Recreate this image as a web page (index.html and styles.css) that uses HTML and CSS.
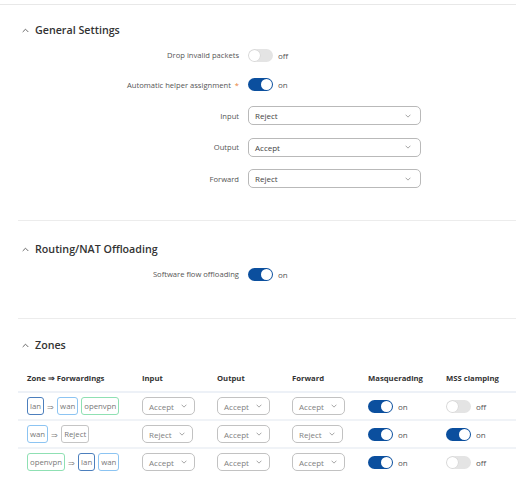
FILE: index.html
```html
<!DOCTYPE html>
<html>
<head>
<meta charset="utf-8">
<link rel="stylesheet" href="styles.css">
</head>
<body>
<div class="topbar"></div>

<section class="sec sec-general">
  <h2 class="sec-head"><svg class="caret" viewBox="0 0 8 5"><polyline points="0.8,4.2 4,1 7.2,4.2"/></svg>General Settings</h2>
  <div class="form">
    <div class="row r1"><label class="lbl">Drop invalid packets</label><div class="ctl"><span class="tog"></span><span class="st">off</span></div></div>
    <div class="row r2"><label class="lbl">Automatic helper assignment <span class="req">*</span></label><div class="ctl"><span class="tog on"></span><span class="st">on</span></div></div>
    <div class="row r3"><label class="lbl">Input</label><div class="ctl"><div class="sel"><span>Reject</span><svg class="chev" viewBox="0 0 8 5"><polyline points="0.8,0.8 4,4 7.2,0.8"/></svg></div></div></div>
    <div class="row r3"><label class="lbl">Output</label><div class="ctl"><div class="sel"><span>Accept</span><svg class="chev" viewBox="0 0 8 5"><polyline points="0.8,0.8 4,4 7.2,0.8"/></svg></div></div></div>
    <div class="row r3"><label class="lbl">Forward</label><div class="ctl"><div class="sel"><span>Reject</span><svg class="chev" viewBox="0 0 8 5"><polyline points="0.8,0.8 4,4 7.2,0.8"/></svg></div></div></div>
  </div>
</section>

<section class="sec sec-routing">
  <h2 class="sec-head"><svg class="caret" viewBox="0 0 8 5"><polyline points="0.8,4.2 4,1 7.2,4.2"/></svg>Routing/NAT Offloading</h2>
  <div class="form">
    <div class="row r1"><label class="lbl">Software flow offloading</label><div class="ctl"><span class="tog on"></span><span class="st">on</span></div></div>
  </div>
</section>

<section class="sec sec-zones">
  <h2 class="sec-head"><svg class="caret" viewBox="0 0 8 5"><polyline points="0.8,4.2 4,1 7.2,4.2"/></svg>Zones</h2>
  <div class="ztable">
    <div class="zrow zhead">
      <div class="c">Zone ⇒ Forwardings</div><div class="c">Input</div><div class="c">Output</div><div class="c">Forward</div><div class="c">Masquerading</div><div class="c">MSS clamping</div>
    </div>
    <div class="zrow">
      <div class="c"><span class="bd lan">lan</span><span class="arr">⇒</span><span class="bd wan">wan</span><span class="bd vpn">openvpn</span></div>
      <div class="c"><div class="ssel"><span>Accept</span><svg class="chev" viewBox="0 0 8 5"><polyline points="0.8,0.8 4,4 7.2,0.8"/></svg></div></div>
      <div class="c"><div class="ssel"><span>Accept</span><svg class="chev" viewBox="0 0 8 5"><polyline points="0.8,0.8 4,4 7.2,0.8"/></svg></div></div>
      <div class="c"><div class="ssel"><span>Accept</span><svg class="chev" viewBox="0 0 8 5"><polyline points="0.8,0.8 4,4 7.2,0.8"/></svg></div></div>
      <div class="c"><span class="tog on"></span><span class="st">on</span></div>
      <div class="c"><span class="tog"></span><span class="st">off</span></div>
    </div>
    <div class="zrow">
      <div class="c"><span class="bd wan">wan</span><span class="arr">⇒</span><span class="bd rej">Reject</span></div>
      <div class="c"><div class="ssel"><span>Reject</span><svg class="chev" viewBox="0 0 8 5"><polyline points="0.8,0.8 4,4 7.2,0.8"/></svg></div></div>
      <div class="c"><div class="ssel"><span>Accept</span><svg class="chev" viewBox="0 0 8 5"><polyline points="0.8,0.8 4,4 7.2,0.8"/></svg></div></div>
      <div class="c"><div class="ssel"><span>Reject</span><svg class="chev" viewBox="0 0 8 5"><polyline points="0.8,0.8 4,4 7.2,0.8"/></svg></div></div>
      <div class="c"><span class="tog on"></span><span class="st">on</span></div>
      <div class="c"><span class="tog on"></span><span class="st">on</span></div>
    </div>
    <div class="zrow last">
      <div class="c"><span class="bd vpn">openvpn</span><span class="arr">⇒</span><span class="bd lan">lan</span><span class="bd wan">wan</span></div>
      <div class="c"><div class="ssel"><span>Accept</span><svg class="chev" viewBox="0 0 8 5"><polyline points="0.8,0.8 4,4 7.2,0.8"/></svg></div></div>
      <div class="c"><div class="ssel"><span>Accept</span><svg class="chev" viewBox="0 0 8 5"><polyline points="0.8,0.8 4,4 7.2,0.8"/></svg></div></div>
      <div class="c"><div class="ssel"><span>Accept</span><svg class="chev" viewBox="0 0 8 5"><polyline points="0.8,0.8 4,4 7.2,0.8"/></svg></div></div>
      <div class="c"><span class="tog on"></span><span class="st">on</span></div>
      <div class="c"><span class="tog"></span><span class="st">off</span></div>
    </div>
  </div>
</section>
</body>
</html>
```

FILE: styles.css
```css
* { box-sizing: border-box; }
html, body { margin: 0; padding: 0; background: #fff; }
body {
  font-family: "Open Sans", "Noto Sans", sans-serif;
  color: #444;
  width: 516px;
  overflow: hidden;
}
.topbar { height: 5px; border-bottom: 1px solid #e8e8e8; }

.sec { margin-left: 18px; }
.sec-general { padding-top: 15px; height: 216px; border-bottom: 1px solid #ececec; }
.sec-general .form { margin-top: 1px; }
.sec-routing { padding-top: 18px; height: 98px; border-bottom: 1px solid #ececec; }
.sec-routing .form { margin-top: 1px; }
.sec-zones { padding-top: 16px; }

.sec-head {
  margin: 0;
  height: 20px;
  display: flex;
  align-items: center;
  font-size: 10.7px;
  font-weight: 600;
  color: #333;
}
.caret {
  width: 7px; height: 5px;
  margin-left: 4px; margin-right: 6px;
  fill: none; stroke: #555; stroke-width: 1;
}

.form { display: flex; flex-direction: column; }
.row { display: grid; grid-template-columns: 221px auto; column-gap: 9px; align-items: center; }
.r1 { height: 28px; }
.r2 { height: 31px; }
.r3 { height: 31.5px; }
.lbl { text-align: right; font-size: 7.6px; color: #555; white-space: nowrap; }
.req { color: #e8833a; margin-left: 2px; }
.ctl { display: flex; align-items: center; }

.tog {
  position: relative;
  display: inline-block;
  width: 25px; height: 13px;
  border-radius: 7px;
  background: #e4e4e4;
  flex: none;
}
.tog::after {
  content: "";
  position: absolute;
  top: 1px; left: 1px;
  width: 11px; height: 11px;
  border-radius: 50%;
  background: #fff;
  box-shadow: 0 0 0 0.5px #d0d0d0;
}
.tog.on { background: #0b4f9e; }
.tog.on::after { left: 13px; box-shadow: none; }
.st { font-size: 8px; color: #555; margin-left: 5px; }

.sel {
  width: 173px; height: 19px;
  border: 1px solid #b9b9b9;
  border-radius: 5px;
  display: flex; align-items: center; justify-content: space-between;
  padding: 0 9px 0 6px;
  font-size: 8px; color: #444;
}
.chev { width: 6px; height: 4px; fill: none; stroke: #888; stroke-width: 1; }

.ztable { margin-top: 10px; }
.zrow {
  display: grid;
  grid-template-columns: 115px 75px 75px 76px 78px auto;
  height: 28px;
  align-items: center;
  border-top: 2px solid #f0f3f7;
}
.zrow.zhead { border-top: none; height: 26px; }
.zrow.zhead + .zrow { border-top: 2px solid #edf1f7; }
.c { padding-left: 9px; display: flex; align-items: center; white-space: nowrap; }
.zhead .c { font-size: 7.7px; font-weight: 700; color: #333; }

.bd {
  display: inline-flex; align-items: center;
  height: 18px;
  padding: 0 2px;
  border: 1px solid #999;
  border-radius: 3px;
  font-size: 7.8px; color: #777;
  margin-right: 3px;
}
.bd.lan { border-color: #4c7fbd; }
.bd.wan { border-color: #8cc4f2; }
.bd.vpn { border-color: #8fe0b3; }
.bd.rej { border-color: #c5c5c5; }
.arr { font-size: 8px; color: #888; margin: 0 3px 0 0; }

.ssel {
  height: 18px;
  border: 1px solid #c2c2c2;
  border-radius: 5px;
  display: inline-flex; align-items: center;
  padding: 0 7px 0 6px;
  font-size: 8px; color: #808080;
}
.ssel .chev { margin-left: 7px; }
```
